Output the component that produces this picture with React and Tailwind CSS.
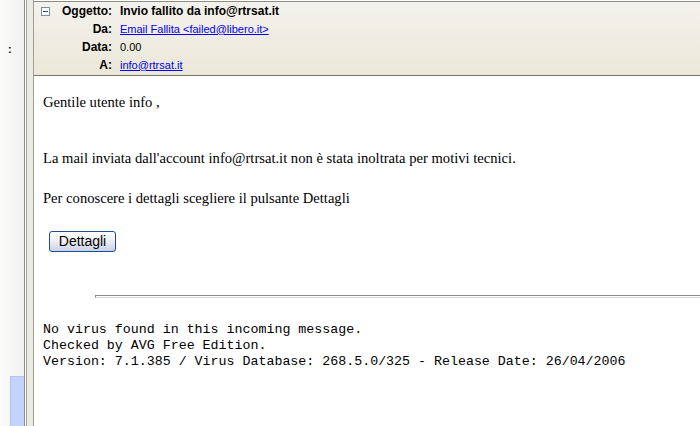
import React from "react";

export default function App() {
  return (
    <div className="w-[700px] h-[426px] overflow-hidden flex bg-white">
      {/* left pane */}
      <div className="relative w-[24px] h-full bg-gradient-to-r from-[#fbfbfb] to-[#f1f1ef]">
        <div className="absolute left-[8px] top-[43px] text-[11px] leading-[12px] text-black font-bold" style={{ fontFamily: "'Liberation Sans', sans-serif" }}>:</div>
        <div className="absolute left-[10px] top-[376px] w-[14px] h-[60px] bg-[#c3d3fd] border-l border-t border-[#b0c4f4]" />
      </div>
      <div className="w-px h-full bg-[#8c8c8c]" />
      <div className="w-px h-full bg-white" />
      <div className="w-px h-full bg-[#a5a59a]" />
      <div className="w-[6px] h-full bg-[#ecebe3]" />
      <div className="w-px h-full bg-[#a09f95]" />
      {/* main */}
      <div className="flex-1 flex flex-col min-w-0">
        <div className="mt-px h-[75px] border-t border-b border-[#8d8d80] border-b-[#77776a] bg-gradient-to-b from-[#f3f2ec] to-[#ebe8d9] pt-0" style={{ fontFamily: "'Liberation Sans', sans-serif" }}>
          <div className="flex items-center h-[18px] text-[12px]">
            <div className="w-[78px] flex items-center pl-[7px]">
              <div className="w-[9px] h-[9px] border border-[#7a8ea8] bg-white flex items-center justify-center">
                <div className="w-[5px] h-px bg-[#3a4a6a]" />
              </div>
              <span className="ml-auto font-bold text-black">Oggetto:</span>
            </div>
            <span className="ml-[8px] font-bold text-black">Invio fallito da info@rtrsat.it</span>
          </div>
          <div className="flex items-center h-[18px] text-[11px]">
            <span className="w-[78px] text-right font-bold text-black text-[12px]">Da:</span>
            <span className="ml-[8px] text-[#0000ee] underline">Email Fallita &lt;failed@libero.it&gt;</span>
          </div>
          <div className="flex items-center h-[18px] text-[11px]">
            <span className="w-[78px] text-right font-bold text-black text-[12px]">Data:</span>
            <span className="ml-[8px] text-black">0.00</span>
          </div>
          <div className="flex items-center h-[18px] text-[11px]">
            <span className="w-[78px] text-right font-bold text-black text-[12px]">A:</span>
            <span className="ml-[8px] text-[#0000ee] underline">info@rtrsat.it</span>
          </div>
        </div>
        <div className="flex-1 pl-[9px] pt-[17px] text-black" style={{ fontFamily: "'Liberation Serif', serif" }}>
          <p className="text-[14.6px] leading-[18px]">Gentile utente info ,</p>
          <p className="text-[14.6px] leading-[18px] mt-[38px]">La mail inviata dall'account info@rtrsat.it non è stata inoltrata per motivi tecnici.</p>
          <p className="text-[14.6px] leading-[18px] mt-[22px]">Per conoscere i dettagli scegliere il pulsante Dettagli</p>
          <button
            className="block mt-[24px] ml-[6px] w-[67px] h-[21px] rounded-[3px] border border-[#1f4d8a] bg-gradient-to-b from-white via-[#eeeef2] to-[#c9d2ea] text-[14px] leading-[19px] text-black"
            style={{ fontFamily: "'Liberation Sans', sans-serif" }}
          >
            Dettagli
          </button>
          <div className="mt-[43px] ml-[52px] -mr-[20px] h-[3px] border border-t-[#8c8c8c] border-l-[#8c8c8c] border-b-[#d8d8d8] border-r-[#d8d8d8]" />
          <pre className="mt-[24px] text-[13.3px] leading-[16px]" style={{ fontFamily: "'Liberation Mono', monospace" }}>
{`No virus found in this incoming message.
Checked by AVG Free Edition.
Version: 7.1.385 / Virus Database: 268.5.0/325 - Release Date: 26/04/2006`}
          </pre>
        </div>
      </div>
    </div>
  );
}
